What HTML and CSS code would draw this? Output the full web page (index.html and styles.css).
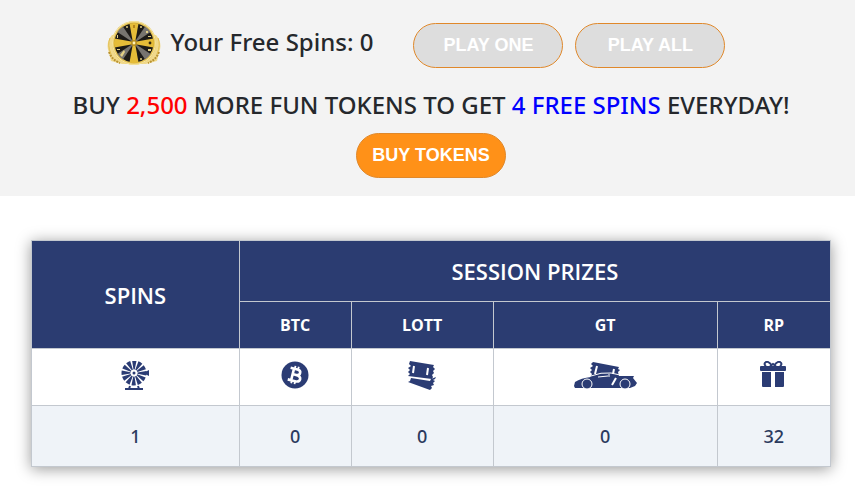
FILE: index.html
```html
<!DOCTYPE html>
<html lang="en">
<head>
<meta charset="utf-8">
<title>Free Spins</title>
<link rel="stylesheet" href="styles.css">
</head>
<body>
<section class="spins-panel">
  <div class="spins-row">
    <svg class="wheel" viewBox="0 0 54 46" aria-hidden="true">
      <defs>
        <path id="wedge" d="M27 22 L23.1 2.4 A20 20 0 0 1 30.9 2.4 Z"/>
        <path id="gold-wedge" d="M26 22 L22.500 2.500 A20 20 0 0 1 31.500 2.500 L28 22 Z"/>
      </defs>
      <path d="M5 14 Q-2 22 2 32 L4 40 L15 43 L39 43 L50 40 L52 32 Q56 22 49 14 Z" fill="#f0d98c"/>
      <path d="M2 31 Q5 39 13 42 M52 31 Q49 39 41 42" fill="none" stroke="#b99231" stroke-width="2" stroke-dasharray="2 1"/>
      <path d="M3 17 Q0 24 4 33 M51 17 Q54 24 50 33" fill="none" stroke="#e3bd4e" stroke-width="1"/>
      <circle cx="27" cy="22" r="22" fill="#e6c456"/>
      <circle cx="27" cy="22" r="21.4" fill="none" stroke="#f6e6a6" stroke-width="1"/>
      <circle cx="27" cy="22" r="19.500" fill="#1c1a17"/>
      <g fill="#77746f">
        <use href="#wedge" transform="rotate(45 27 22)"/>
        <use href="#wedge" transform="rotate(135 27 22)"/>
        <use href="#wedge" transform="rotate(225 27 22)"/>
        <use href="#wedge" transform="rotate(315 27 22)"/>
      </g>
      <g fill="#e5bc38">
        <use href="#gold-wedge"/>
        <use href="#gold-wedge" transform="rotate(90 27 22)"/>
        <use href="#gold-wedge" transform="rotate(180 27 22)"/>
        <use href="#gold-wedge" transform="rotate(270 27 22)"/>
      </g>
      <g fill="#e2cf85">
        <circle cx="34" cy="6" r="1"/>
        <circle cx="20" cy="6" r="1"/>
        <rect x="39" y="10" width="2" height="2"/>
        <rect x="41" y="15" width="3" height="1"/>
        <rect x="41" y="28" width="3" height="2"/>
        <circle cx="34" cy="38" r="1"/>
        <path d="M13 34 L17 29 L18 31 L15 36 Z"/>
        <rect x="10" y="14" width="1" height="3"/>
        <rect x="10" y="28" width="3" height="1"/>
      </g>
      <circle cx="43" cy="22" r="1.4" fill="#33270e"/>
      <rect x="26" y="4" width="2" height="3" fill="#b5861c"/>
      <circle cx="27" cy="22" r="3" fill="#b98f22"/>
      <circle cx="27" cy="22" r="1.4" fill="#fff3b8"/>
    </svg>
    <span class="spins-count">Your Free Spins: 0</span>
    <div class="play-buttons">
      <button type="button" class="btn" disabled>PLAY ONE</button>
      <button type="button" class="btn" disabled>PLAY ALL</button>
    </div>
  </div>
  <p class="offer">BUY <span class="red">2,500</span> MORE FUN TOKENS TO GET <span class="blue">4 FREE SPINS</span> EVERYDAY!</p>
  <button type="button" class="btn">BUY TOKENS</button>
</section>

<main class="prizes">
  <table class="prize-table">
    <colgroup>
      <col class="col-spins">
      <col class="col-btc">
      <col class="col-lott">
      <col class="col-gt">
      <col class="col-rp">
    </colgroup>
    <thead>
      <tr class="title-row">
        <th rowspan="2" scope="col">SPINS</th>
        <th colspan="4" scope="colgroup">SESSION PRIZES</th>
      </tr>
      <tr class="name-row">
        <th scope="col">BTC</th>
        <th scope="col">LOTT</th>
        <th scope="col">GT</th>
        <th scope="col">RP</th>
      </tr>
    </thead>
    <tbody>
      <tr class="icon-row">
        <td>
          <svg width="28" height="30" viewBox="0 0 28 30" aria-hidden="true">
            <circle cx="13" cy="12" r="8" fill="none" stroke="#2b3c74" stroke-width="9" pathLength="120" stroke-dasharray="7 3" stroke-dashoffset="3"/>
            <circle cx="13" cy="12" r="1.5" fill="#2b3c74"/>
            <path d="M22 12 L28 9 V15 Z" fill="#2b3c74"/>
            <path d="M9 25 L8 28 M17 25 L18 28" stroke="#2b3c74" stroke-width="2"/>
            <rect x="4" y="27" width="18" height="2" fill="#2b3c74"/>
          </svg>
        </td>
        <td>
          <svg width="28" height="30" viewBox="0 0 28 30" aria-hidden="true">
            <circle cx="14" cy="14" r="13.5" fill="#2b3c74"/>
            <g transform="rotate(14 14 14)" fill="none" stroke="#fff" stroke-width="2.6">
              <path d="M8 8 H15 Q18.500 8 18.500 10.800 Q18.500 13.700 15 13.700 H11.500 M15 13.700 Q20 13.700 20 17 Q20 20 15.500 20 H8 M11.500 8 V20"/>
              <path d="M12.300 5 V8 M15.700 5 V8 M12.300 20 V23 M15.700 20 V23" stroke-width="1.800"/>
            </g>
          </svg>
        </td>
        <td>
          <svg width="30" height="30" viewBox="0 0 30 30" aria-hidden="true">
            <path d="M3 0 L27 4 L26 6 L28 8 L26 10 L27 12 L25 14 L26 16 L25 18 L1 15 L3 13 L1 11 L3 9 L1 7 L4 5 L2 3 Z" fill="#2b3c74"/>
            <path d="M7 5 L6 12 M21 7 L20 14" stroke="#fff" stroke-width="2"/>
            <path d="M4 17 L23 20 L24 18 L29 16 L28 18 L26 19 L28 20 L26 22 L27 24 L24 25 L25 27 L23 29 L1 21 L3 20 Z" fill="#2b3c74"/>
          </svg>
        </td>
        <td>
          <svg width="64" height="30" viewBox="0 0 64 30" aria-hidden="true">
            <path d="M20 1 L46 6 L45 8 L47 9 L45 11 L46 15 L17 17 L19 13 L17 11 L19 9 L17 7 L20 5 L18 3 Z" fill="#2b3c74"/>
            <path d="M24 5 L22 13 M41 8 L40 13" stroke="#fff" stroke-width="2"/>
            <path d="M1 25 L2 21 Q8 17 18 16 L26 13 Q31 12 38 13 L46 15 L61 15 L60 17 L64 22 L62 25 L57 27 H2 Z" fill="#2b3c74"/>
            <path d="M18 15 Q28 11 38 12 L47 14" fill="none" stroke="#fff" stroke-width="1"/>
            <path d="M36 13 V16 M25 16 L35 15" fill="none" stroke="#fff" stroke-width="1"/>
            <path d="M43 17 L39 24" stroke="#fff" stroke-width="2"/>
            <g fill="#2b3c74" stroke="#fff" stroke-width="1">
              <circle cx="14" cy="23" r="5"/>
              <circle cx="52" cy="23" r="5"/>
            </g>
          </svg>
        </td>
        <td>
          <svg width="28" height="30" viewBox="0 0 28 30" aria-hidden="true">
            <rect x="0" y="5" width="26" height="5" rx="1" fill="#2b3c74"/>
            <path d="M2 11 H11 V26 H3 Q2 26 2 25 Z M15 11 H24 V25 Q24 26 23 26 H15 Z" fill="#2b3c74"/>
            <path d="M12 5 Q9 0 6 1 Q3 3 6 5 M14 5 Q17 0 20 1 Q23 3 20 5 M10 5 L13 3 L16 5" fill="none" stroke="#2b3c74" stroke-width="2"/>
          </svg>
        </td>
      </tr>
      <tr class="value-row">
        <td>1</td>
        <td>0</td>
        <td>0</td>
        <td>0</td>
        <td>32</td>
      </tr>
    </tbody>
  </table>
</main>
</body>
</html>
```

FILE: styles.css
```css
body {
    margin: 0;
    font-family: "Noto Sans", "Open Sans", sans-serif;
    font-weight: 500;
    color: #25282c;
    background-color: #fff;
}

.spins-panel {
    display: flex;
    flex-direction: column;
    align-items: center;
    padding: 20px 24px 18px 31px;
    background-color: #f3f3f3;
}

.spins-row {
    display: flex;
    align-items: flex-start;
    padding-right: 30px;
}

.wheel {
    width: 54px;
    height: 46px;
    margin-top: 1px;
}

.spins-count {
    margin-left: 10px;
    font-size: 24px;
    line-height: 44px;
}

.play-buttons {
    display: flex;
    gap: 12px;
    margin-left: 40px;
    padding-top: 3px;
}

.btn {
    width: 150px;
    height: 45px;
    padding: 0;
    border: 1px solid #e0882a;
    border-radius: 23px;
    background-color: #ff9118;
    color: #fff;
    font-family: "Liberation Sans", Arial, sans-serif;
    font-size: 18px;
    font-weight: bold;
    cursor: pointer;
}

.btn:disabled {
    background-color: #ddd;
    cursor: default;
}

.offer {
    margin: 19px 0 11px;
    font-size: 24px;
    line-height: 35px;
    text-align: center;
}

.red {
    color: #f00;
}

.blue {
    color: #00f;
}

.prizes {
    padding: 44px 24px 37px 31px;
}

.prize-table {
    width: 100%;
    table-layout: fixed;
    border-collapse: collapse;
    text-align: center;
    box-shadow: 0 2px 14px rgba(0, 0, 0, 0.4);
}

.col-spins {
    width: 26%;
}

.col-btc {
    width: 14%;
}

.col-lott {
    width: 17.8%;
}

.col-gt {
    width: 28%;
}

th,
td {
    padding: 0;
    border: 1px solid #c3c8cf;
}

th {
    background-color: #2b3c71;
    color: #fff;
    font-family: "Open Sans", "Noto Sans", sans-serif;
    font-weight: 600;
}

.title-row th {
    height: 60px;
    font-size: 22px;
}

.name-row th {
    height: 46px;
    font-size: 16px;
    font-weight: 700;
}

.icon-row td {
    height: 54px;
    padding-bottom: 2px;
    background-color: #fff;
}

.icon-row svg {
    display: block;
    margin: 0 auto;
}

.value-row td {
    height: 60px;
    background-color: #eff3f8;
    color: #2b3a5e;
    font-size: 18px;
}
```
